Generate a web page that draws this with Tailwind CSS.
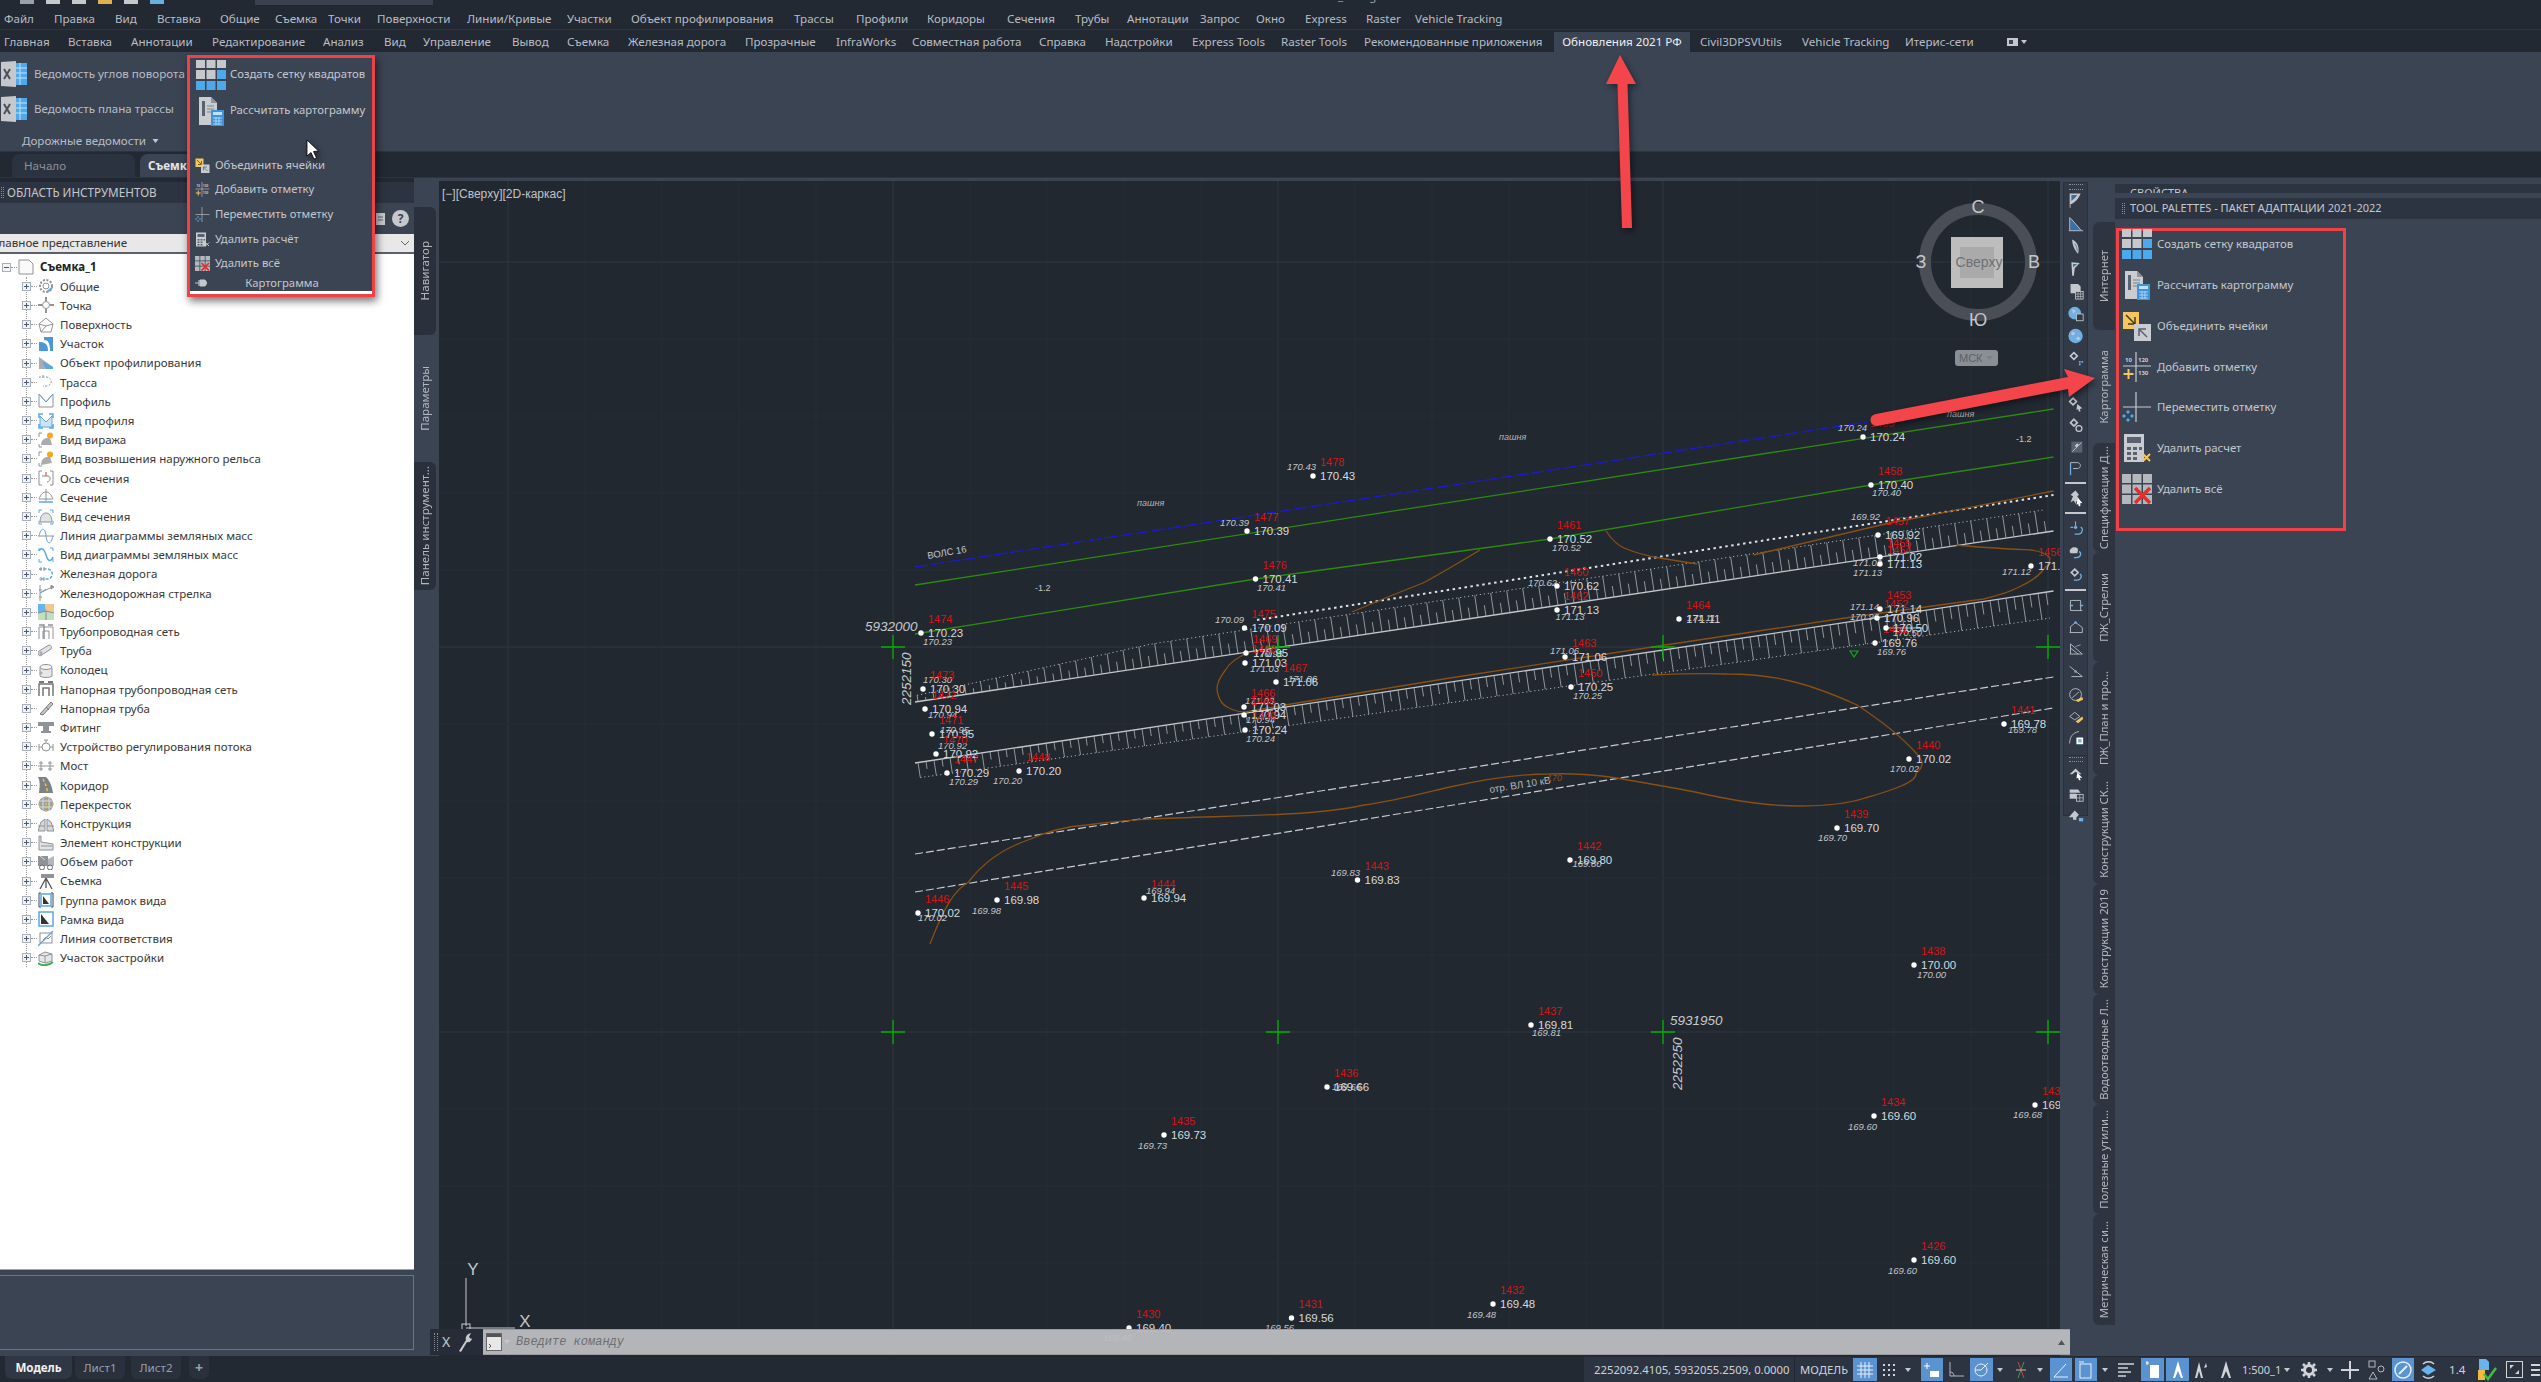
<!DOCTYPE html>
<html lang="ru">
<head>
<meta charset="UTF-8" />
<title>Civil 3D - Картограмма</title>
<script src="https://cdn.jsdelivr.net/npm/@tailwindcss/browser@4"></script>
</head>
<body class="bg-[#222933]">
<!-- shared icons -->
<svg class="hidden">
  <symbol id="i-grid" viewBox="0 0 30 30">
    <path d="M0 0h9v8H0zM10.500 0h9v8h-9zM21 0h9v8h-9zM0 10h9v9H0zM10.500 10h9v9h-9z" fill="#c6c8cc"/>
    <path d="M21 10h9v9h-9zM0 21h9v9H0zM10.500 21h9v9h-9zM21 21h9v9h-9z" fill="#4ea9ec"/>
  </symbol>
  <symbol id="i-calc" viewBox="0 0 30 30">
    <path d="M3 1h12l6 6v22H3z" fill="#c9ccd0"/><path d="M15 1v6h6z" fill="#8e949c"/>
    <rect x="6" y="5" width="3" height="15" fill="#59626e"/><path d="M11 10h7M11 13h7M11 16h4" stroke="#7d848e"/>
    <rect x="15" y="14" width="13" height="16" fill="#3f93da"/><rect x="17" y="16" width="9" height="3" fill="#bfe0f7"/>
    <path d="M17 22h9M17 25h9M17 28h9M20 21v8M23 21v8" stroke="#bfe0f7" stroke-width=".8"/>
  </symbol>
  <symbol id="i-merge" viewBox="0 0 30 30">
    <rect x="1" y="1" width="16" height="17" fill="#f3c660"/><path d="M4 4l9 9M13 6v7H6" stroke="#4a3b17" stroke-width="1.500" fill="none"/>
    <rect x="12" y="13" width="17" height="17" fill="#c9ccd0"/><path d="M25 26l-8-8M17 25v-7h7" stroke="#59626e" stroke-width="1.500" fill="none"/>
  </symbol>
  <symbol id="i-add" viewBox="0 0 30 30">
    <path d="M14 0v30M1 14h28" stroke="#c9ccd0" stroke-width="1.200"/>
    <text x="3" y="10" font-size="6" font-weight="700" fill="#c9ccd0">10</text><text x="16" y="10" font-size="6" font-weight="700" fill="#c9ccd0">120</text><text x="16" y="23" font-size="6" font-weight="700" fill="#c9ccd0">130</text>
    <path d="M6.500 17v10M1.500 22h10" stroke="#f3c660" stroke-width="2"/>
  </symbol>
  <symbol id="i-move" viewBox="0 0 30 30">
    <path d="M14 0v30M1 15h28" stroke="#c9ccd0" stroke-width="1.200"/>
    <path d="M6 18l2 2-2 2-2-2zM6 26l2 2-2 2-2-2zM2 22l2 2-2 2-2-2zM10 22l2 2-2 2-2-2z" fill="#4ea9ec"/>
  </symbol>
  <symbol id="i-delcalc" viewBox="0 0 30 30">
    <rect x="2" y="1" width="20" height="28" fill="#c9ccd0"/><rect x="5" y="4" width="14" height="6" fill="#59626e"/>
    <path d="M5 14h4v3H5zM11 14h4v3h-4zM17 14h3v3h-3zM5 19h4v3H5zM11 19h4v3h-4zM5 24h4v3H5zM11 24h4v3h-4z" fill="#59626e"/>
    <path d="M21 21l7 7M28 21l-7 7" stroke="#f3c660" stroke-width="2"/>
  </symbol>
  <symbol id="i-delall" viewBox="0 0 30 30">
    <path d="M0 0h9v9H0zM10.500 0h9v9h-9zM21 0h9v9h-9zM0 10.500h9v9H0zM10.500 10.500h9v9h-9zM21 10.500h9v9h-9zM0 21h9v9H0zM10.500 21h9v9h-9zM21 21h9v9h-9z" fill="#b4b7bc"/>
    <path d="M13 14l15 15M28 14L13 29" stroke="#ec2b2b" stroke-width="3.500"/>
  </symbol>
  <symbol id="i-excel" viewBox="0 0 28 28">
    <rect x="13" y="3" width="14" height="22" fill="#4ea9ec"/><path d="M13 8h14M13 13h14M13 18h14M20 3v22" stroke="#c3e2f8"/>
    <path d="M1 2l15-1v26l-15-1z" fill="#c6c8cc"/><path d="M4 9l6 10M10 9l-6 10" stroke="#4a515c" stroke-width="2"/>
  </symbol>
  <symbol id="i-dn" viewBox="0 0 6 4"><path d="M0 0h6L3 4z" fill="#c4c8ce"/></symbol>
</svg>

<div class="relative w-[2541px] h-[1382px] overflow-hidden flex flex-col bg-[#222933] text-[11.6px] text-[#b9bdc4] font-['Noto_Sans','Liberation_Sans',sans-serif]">

  <!-- title strip, cut off by the top of the capture -->
  <div class="h-[8px] flex items-start overflow-hidden">
    <div class="flex gap-[12px] pl-[20px] w-[255px] -mt-[6px]">
      <span class="w-[14px] h-[10px] bg-[#9aa0a8]"></span><span class="w-[14px] h-[10px] bg-[#c6c8cc]"></span><span class="w-[14px] h-[10px] bg-[#c6c8cc]"></span><span class="w-[14px] h-[10px] bg-[#e0b050]"></span><span class="w-[14px] h-[10px] bg-[#c6c8cc]"></span><span class="w-[14px] h-[10px] bg-[#6aaee0]"></span>
    </div>
    <div class="w-[178px] h-[5px] bg-[#3a4250]"></div>
    <div class="ml-[729px] -mt-[13px] text-[#9ba0a8]">Autodesk Civil 3D 2021 - Съемка_1.dwg</div>
  </div>

  <!-- menu bar -->
  <div class="h-[22px] flex items-center pl-[4px] border-b border-[#2d3440] leading-none">
    <span class="w-[50px]">Файл</span><span class="w-[61px]">Правка</span><span class="w-[42px]">Вид</span><span class="w-[63px]">Вставка</span><span class="w-[55px]">Общие</span><span class="w-[53px]">Съемка</span><span class="w-[49px]">Точки</span><span class="w-[90px]">Поверхности</span><span class="w-[100px]">Линии/Кривые</span><span class="w-[64px]">Участки</span><span class="w-[163px]">Объект профилирования</span><span class="w-[62px]">Трассы</span><span class="w-[71px]">Профили</span><span class="w-[80px]">Коридоры</span><span class="w-[68px]">Сечения</span><span class="w-[52px]">Трубы</span><span class="w-[73px]">Аннотации</span><span class="w-[56px]">Запрос</span><span class="w-[49px]">Окно</span><span class="w-[61px]">Express</span><span class="w-[49px]">Raster</span><span>Vehicle Tracking</span>
  </div>

  <!-- ribbon tabs -->
  <div class="h-[20px] mt-[2px] flex items-center pl-[4px] leading-none">
    <span class="w-[64px]">Главная</span><span class="w-[63px]">Вставка</span><span class="w-[81px]">Аннотации</span><span class="w-[111px]">Редактирование</span><span class="w-[61px]">Анализ</span><span class="w-[39px]">Вид</span><span class="w-[89px]">Управление</span><span class="w-[55px]">Вывод</span><span class="w-[61px]">Съемка</span><span class="w-[117px]">Железная дорога</span><span class="w-[91px]">Прозрачные</span><span class="w-[76px]">InfraWorks</span><span class="w-[127px]">Совместная работа</span><span class="w-[66px]">Справка</span><span class="w-[87px]">Надстройки</span><span class="w-[89px]">Express Tools</span><span class="w-[83px]">Raster Tools</span><span class="w-[190px]">Рекомендованные приложения</span>
    <span class="w-[136px] h-[20px] flex items-center justify-center bg-[#3b4453] text-[#eef0f2]">Обновления 2021 РФ</span>
    <span class="ml-[10px] w-[102px]">Civil3DPSVUtils</span><span class="w-[103px]">Vehicle Tracking</span><span class="w-[101px]">Итерис-сети</span>
    <svg class="w-[24px] h-[10px]" viewBox="0 0 24 10"><rect x="1" y="1" width="11" height="8" fill="#c4c8ce"/><rect x="3" y="3" width="4" height="4" fill="#3b4453"/><path d="M15 3h6l-3 4z" fill="#c4c8ce"/></svg>
  </div>

  <!-- ribbon -->
  <div class="h-[100px] bg-[#3b4453] flex flex-col pt-[5px] border-b border-[#2d3440]">
    <div class="h-[36px] flex items-center"><svg class="w-[28px] h-[28px]"><use href="#i-excel"/></svg><span class="ml-[6px]">Ведомость углов поворота</span></div>
    <div class="h-[36px] mt-[1px] flex items-center"><svg class="w-[28px] h-[28px]"><use href="#i-excel"/></svg><span class="ml-[6px]">Ведомость плана трассы</span></div>
    <div class="h-[22px] mt-[4px] flex items-center pl-[22px]"><span>Дорожные ведомости</span><svg class="ml-[6px] w-[7px] h-[4px]"><use href="#i-dn"/></svg></div>
  </div>

  <!-- file tabs -->
  <div class="h-[26px] flex items-end pl-[12px] border-b border-[#2d3440]">
    <div class="w-[123px] h-[23px] flex items-center pl-[12px] bg-[#2c3340] rounded-t-[8px] text-[#8b919a]">Начало</div>
    <div class="ml-[5px] w-[60px] h-[23px] flex items-center pl-[8px] bg-[#3b4453] rounded-t-[8px] font-bold text-[#e4e6e9]">Съемка</div>
  </div>

  <!-- main row -->
  <div class="relative flex-1 flex bg-[#3b4453] min-h-0">

    <!-- left: toolspace -->
    <div class="w-[414px] flex flex-col bg-[#3b4453]">
      <div class="h-[4px] bg-[#222933]"></div>
      <div class="h-[21px] flex items-center pl-[1px] gap-[3px] bg-[#2d3441] text-[11.7px] text-[#c4c8ce]"><span class="w-[3px] h-[11px] border-x border-dotted border-[#8a9099]"></span>ОБЛАСТЬ ИНСТРУМЕНТОВ</div>
      <div class="h-[31px] flex items-center justify-end pr-[5px] gap-[6px]">
        <svg class="w-[10px] h-[14px]" viewBox="0 0 10 14"><path d="M0 1h9v12H0z" fill="#c6c8cc"/><path d="M2 5h5M2 8h5" stroke="#59626e"/></svg>
        <span class="w-[17px] h-[17px] rounded-full bg-[#c6c8cc] text-[#3b4453] text-[12px] font-bold flex items-center justify-center leading-none">?</span>
      </div>
      <div class="h-[20px] flex items-center justify-between bg-[#e8e8e8] border-b-2 border-[#5b6068] text-[#333] overflow-hidden">
        <span class="-ml-[7px] whitespace-nowrap">Главное представление</span>
        <svg class="w-[8px] h-[5px] mr-[5px]" viewBox="0 0 8 5"><path d="M0 0l4 4 4-4" stroke="#666" fill="none"/></svg>
      </div>
      <div id="tree" class="h-[1015px] bg-white text-[#383838] text-[11.5px] pt-[3.500px]"></div>
      <div class="h-[6px] border-t border-[#9ea3aa]"></div>
      <div class="h-[75px] border border-l-0 border-[#6d7480]"></div>
    </div>

    <!-- left: vertical tabs -->
    <div class="w-[25px] flex flex-col pt-[29px] text-[#b4b8be]">
      <div class="h-[128px] w-[22px] bg-[#2a313c] rounded-r-[6px] flex items-center justify-center"><span class="[writing-mode:vertical-rl] rotate-180">Навигатор</span></div>
      <div class="h-[127px] w-[22px] bg-[#3b4453] flex items-center justify-center"><span class="[writing-mode:vertical-rl] rotate-180">Параметры</span></div>
      <div class="h-[128px] w-[22px] bg-[#2a313c] rounded-r-[6px] flex items-center justify-center"><span class="[writing-mode:vertical-rl] rotate-180">Панель инструмент...</span></div>
    </div>

    <!-- drawing -->
    <div class="w-[1621px] pt-[3px] bg-[#3b4453]">
      <svg id="draw" class="block w-[1621px] h-[1175px] bg-[#212830] font-['Liberation_Sans',sans-serif]" viewBox="439 181 1621 1175"></svg>
    </div>

    <!-- right side -->
    <div class="flex-1 flex min-w-0">
      <div class="w-[33px] pl-[3px] pt-[4px]">
        <div id="strip" class="w-[25px] h-[634px] bg-[#323a47] border border-[#2a313c] flex flex-col items-center"></div>
      </div>
      <div id="rtabs" class="w-[22px] flex flex-col pt-[44px] text-[#b4b8be]"></div>
      <div class="flex-1 min-w-0 flex flex-col">
        <div class="h-[6px]"></div>
        <div class="h-[9px] overflow-hidden bg-[#2d3441] pl-[15px] text-[11px] leading-[17px] text-[#c4c8ce]">СВОЙСТВА</div>
        <div class="h-[5px]"></div>
        <div class="h-[21px] flex items-center pl-[7px] gap-[5px] bg-[#2d3441] text-[11px] text-[#c4c8ce] whitespace-nowrap"><span class="w-[3px] h-[11px] border-x border-dotted border-[#8a9099]"></span>TOOL PALETTES - ПАКЕТ АДАПТАЦИИ 2021-2022</div>
        <div class="ml-[1px] mt-[9px] w-[230px] h-[303px] border-[3px] border-[#ef4146] flex flex-col pl-[3px] text-[11.400px] text-[#c4c8ce]">
          <div class="h-[28px] flex items-center -mt-[1px]"><svg class="w-[30px] h-[30px] shrink-0"><use href="#i-grid"/></svg><span class="ml-[5px]">Создать сетку квадратов</span></div>
          <div class="h-[41px] mt-[6px] flex items-center"><svg class="w-[30px] h-[30px]"><use href="#i-calc"/></svg><span class="ml-[5px]">Рассчитать картограмму</span></div>
          <div class="h-[41px] flex items-center"><svg class="w-[30px] h-[30px]"><use href="#i-merge"/></svg><span class="ml-[5px]">Объединить ячейки</span></div>
          <div class="h-[41px] flex items-center"><svg class="w-[30px] h-[30px]"><use href="#i-add"/></svg><span class="ml-[5px]">Добавить отметку</span></div>
          <div class="h-[40px] flex items-center"><svg class="w-[30px] h-[30px]"><use href="#i-move"/></svg><span class="ml-[5px]">Переместить отметку</span></div>
          <div class="h-[41px] flex items-center"><svg class="w-[30px] h-[30px]"><use href="#i-delcalc"/></svg><span class="ml-[5px]">Удалить расчет</span></div>
          <div class="h-[41px] flex items-center"><svg class="w-[30px] h-[30px]"><use href="#i-delall"/></svg><span class="ml-[5px]">Удалить всё</span></div>
        </div>
      </div>
    </div>

    <!-- command line floats over the drawing -->
    <div class="absolute left-[430px] top-[1151px] w-[1640px] h-[26px] flex items-stretch">
      <div class="w-[53px] bg-[#262d38] flex items-center pl-[4px] gap-[4px]">
        <span class="w-[4px] h-[18px] border-x border-dotted border-[#8a9099]"></span>
        <span class="text-[14px] text-[#c6c8cc] leading-none">X</span>
        <svg class="ml-[3px] w-[16px] h-[20px]" viewBox="0 0 16 20"><path d="M2 19l7-11c-1-3 1-6 5-7l-2 4 2 2 1-1c0 3-3 5-5 4l-6 10z" fill="#c6c8cc"/></svg>
      </div>
      <div class="flex-1 bg-[#bcbdc0]/95 flex items-center pl-[3px] border-y border-[#9a9ca0]">
        <svg class="w-[16px] h-[18px]" viewBox="0 0 16 18"><rect x=".5" y=".5" width="15" height="17" fill="#e8e8e8" stroke="#666"/><rect x="1" y="1" width="14" height="3" fill="#555"/><path d="M3 11l2 2-2 2" stroke="#555" fill="none"/></svg>
        <svg class="ml-[2px] w-[6px] h-[4px]"><use href="#i-dn"/></svg>
        <span class="ml-[6px] italic text-[#6d6f73] font-['Liberation_Mono',monospace] text-[12px]">Введите команду</span>
        <svg class="ml-auto mr-[5px] w-[7px] h-[5px]" viewBox="0 0 7 5"><path d="M0 5h7L3.500 0z" fill="#555"/></svg>
      </div>
    </div>
  </div>

  <!-- layout tabs + status bar -->
  <div class="h-[26px] flex items-center">
    <div class="ml-[5px] w-[67px] h-[23px] -mt-[3px] flex items-center justify-center bg-[#2f3744] rounded-b-[7px] font-bold text-[#f0f1f3]">Модель</div>
    <div class="ml-[3px] w-[50px] h-[23px] -mt-[3px] flex items-center justify-center bg-[#2a313c] rounded-b-[7px] text-[#9ba0a8]">Лист1</div>
    <div class="ml-[6px] w-[50px] h-[23px] -mt-[3px] flex items-center justify-center bg-[#2a313c] rounded-b-[7px] text-[#9ba0a8]">Лист2</div>
    <div class="ml-[8px] w-[20px] h-[23px] -mt-[3px] flex items-center justify-center bg-[#2a313c] rounded-b-[7px] text-[#9ba0a8] text-[14px] font-bold">+</div>

    <div class="absolute left-[1584px] bottom-0 w-[957px] h-[25px] flex items-center bg-[#2d3441] text-[#d0d3d8] leading-none whitespace-nowrap">
      <div class="w-[211px] pl-[10px] border-r border-[#222933] h-full flex items-center text-[11.300px]">2252092.4105, 5932055.2509, 0.0000</div>
      <div class="w-[58px] pl-[5px] text-[11.300px]">МОДЕЛЬ</div>
      <div class="w-[24px] h-[23px] bg-[#5a93cf] flex items-center justify-center"><svg class="w-[16px] h-[16px]" viewBox="0 0 16 16"><path d="M4 0v16M8 0v16M12 0v16M0 4h16M0 8h16M0 12h16" stroke="#e8eef5"/></svg></div>
      <svg class="ml-[5px] w-[13px] h-[13px]" viewBox="0 0 13 13"><path d="M1 1h2v2H1zM6 1h2v2H6zM11 1h2v2h-2zM1 6h2v2H1zM6 6h2v2H6zM11 6h2v2h-2zM1 11h2v2H1zM6 11h2v2H6zM11 11h2v2h-2z" fill="#d0d3d8"/></svg>
      <svg class="ml-[10px] w-[6px] h-[4px]"><use href="#i-dn"/></svg>
      <div class="ml-[10px] w-[22px] h-[23px] bg-[#5a93cf] flex items-center justify-center"><svg class="w-[16px] h-[16px]" viewBox="0 0 16 16"><path d="M3 1v6M0 4h6" stroke="#fff"/><rect x="6" y="9" width="9" height="6" fill="#fff"/></svg></div>
      <svg class="ml-[4px] w-[18px] h-[18px]" viewBox="0 0 18 18"><path d="M3 1v14h14M3 11c3 0 4 2 4 4" stroke="#b4b8be" fill="none"/></svg>
      <div class="ml-[5px] w-[23px] h-[23px] bg-[#5a93cf] flex items-center justify-center"><svg class="w-[17px] h-[17px]" viewBox="0 0 17 17"><circle cx="8" cy="9" r="6" stroke="#e8eef5" fill="none"/><path d="M8 9l7-7M2 9h6" stroke="#e8eef5"/></svg></div>
      <svg class="ml-[4px] w-[6px] h-[4px]"><use href="#i-dn"/></svg>
      <svg class="ml-[12px] w-[12px] h-[18px]" viewBox="0 0 12 18"><path d="M3 1l6 16" stroke="#d04040"/><path d="M9 1L3 17" stroke="#4a9a40"/><path d="M1 9h10" stroke="#b4b8be"/></svg>
      <svg class="ml-[10px] w-[6px] h-[4px]"><use href="#i-dn"/></svg>
      <div class="ml-[7px] w-[22px] h-[23px] bg-[#5a93cf] flex items-center justify-center"><svg class="w-[16px] h-[16px]" viewBox="0 0 16 16"><path d="M1 15L13 2M1 15h14" stroke="#e8eef5" fill="none"/></svg></div>
      <div class="ml-[3px] w-[22px] h-[23px] bg-[#5a93cf] flex items-center justify-center"><svg class="w-[16px] h-[18px]" viewBox="0 0 16 18"><rect x="2" y="3" width="11" height="14" stroke="#e8eef5" fill="none"/><path d="M1 1h5" stroke="#e8eef5"/></svg></div>
      <svg class="ml-[5px] w-[6px] h-[4px]"><use href="#i-dn"/></svg>
      <svg class="ml-[10px] w-[16px] h-[14px]" viewBox="0 0 16 14"><path d="M0 1h16M0 5h10M0 9h13M0 13h8" stroke="#d0d3d8" stroke-width="1.500"/></svg>
      <div class="ml-[7px] w-[23px] h-[23px] bg-[#5a93cf] flex items-center justify-center"><svg class="w-[14px] h-[19px]" viewBox="0 0 14 19"><path d="M1 1v4M-1 3h4" stroke="#fff"/><rect x="4" y="5" width="9" height="13" fill="#fff"/></svg></div>
      <div class="ml-[2px] w-[23px] h-[23px] bg-[#5a93cf] flex items-center justify-center"><svg class="w-[16px] h-[19px]" viewBox="0 0 16 19"><path d="M8 1L3 18h2l3-7 3 7h2z" fill="#fff"/></svg></div>
      <svg class="ml-[4px] w-[17px] h-[19px]" viewBox="0 0 17 19"><path d="M6 2L2 18h2l2-7 2 7h2zM13 3l-2 5 3-1z" fill="#d0d3d8"/></svg>
      <svg class="ml-[8px] w-[16px] h-[19px]" viewBox="0 0 16 19"><path d="M8 1L3 18h2l3-7 3 7h2z" fill="#d0d3d8"/></svg>
      <div class="ml-[8px] w-[37px] text-[11px]">1:500_1</div>
      <svg class="ml-[5px] w-[6px] h-[4px]"><use href="#i-dn"/></svg>
      <svg class="ml-[11px] w-[16px] h-[16px]" viewBox="0 0 16 16"><circle cx="8" cy="8" r="4.500" fill="none" stroke="#d0d3d8" stroke-width="3"/><path d="M8 0v3M8 13v3M0 8h3M13 8h3M2 2l2 2M12 12l2 2M14 2l-2 2M4 12l-2 2" stroke="#d0d3d8" stroke-width="2.500"/></svg>
      <svg class="ml-[10px] w-[6px] h-[4px]"><use href="#i-dn"/></svg>
      <svg class="ml-[8px] w-[18px] h-[18px]" viewBox="0 0 18 18"><path d="M9 0v18M0 9h18" stroke="#d0d3d8" stroke-width="2"/></svg>
      <svg class="ml-[9px] w-[17px] h-[20px]" viewBox="0 0 17 20"><rect x="1" y="1" width="6" height="6" fill="none" stroke="#b4b8be"/><circle cx="13" cy="9" r="3" fill="none" stroke="#b4b8be"/><path d="M5 12l4 7H1z" fill="none" stroke="#b4b8be"/></svg>
      <div class="ml-[7px] w-[22px] h-[23px] bg-[#5a93cf] flex items-center justify-center"><svg class="w-[18px] h-[18px]" viewBox="0 0 18 18"><circle cx="9" cy="9" r="8" fill="none" stroke="#e8eef5" stroke-width="1.500"/><path d="M5 13l8-8" stroke="#e8eef5" stroke-width="2"/></svg></div>
      <svg class="ml-[6px] w-[17px] h-[20px]" viewBox="0 0 17 20"><path d="M8 5l8 5-8 5-7-5z" fill="#6ab4ee"/><path d="M3 4c3-3 8-3 11 0M3 16c3 3 8 3 11 0" fill="none" stroke="#d0d3d8" stroke-width="1.500"/></svg>
      <div class="ml-[12px] w-[15px]">1.4</div>
      <svg class="ml-[11px] w-[22px] h-[23px]" viewBox="0 0 22 23"><path d="M4 1h7l3 3v8H4z" fill="#6ab4ee"/><path d="M3 12h7v10H3z" fill="#f3b83c"/><path d="M9 16l4 5 8-11" stroke="#3ec03e" stroke-width="2.500" fill="none"/></svg>
      <svg class="ml-[9px] w-[17px] h-[17px]" viewBox="0 0 17 17"><rect x=".5" y=".5" width="16" height="16" fill="none" stroke="#d0d3d8"/><path d="M4 4h4L4 8zM13 13H9l4-4z" fill="#d0d3d8"/></svg>
      <svg class="ml-[8px] w-[9px] h-[14px]" viewBox="0 0 9 14"><path d="M0 2h9M0 7h9M0 12h9" stroke="#d0d3d8" stroke-width="2"/></svg>
    </div>
  </div>

  <!-- ribbon panel opened over the tree -->
  <div class="absolute left-[187px] top-[55px] w-[188px] h-[242px] border-[3px] border-[#ef4146] bg-[#3b4453] shadow-[2px_4px_8px_rgba(0,0,0,0.55)] flex flex-col text-[11.300px] text-[#c4c8ce]">
    <div class="h-[36px] -mt-[1px] flex items-center pl-[6px]"><svg class="w-[30px] h-[30px]"><use href="#i-grid"/></svg><span class="ml-[4px] whitespace-nowrap">Создать сетку квадратов</span></div>
    <div class="h-[36px] flex items-center pl-[6px]"><svg class="w-[30px] h-[30px]"><use href="#i-calc"/></svg><span class="ml-[4px] whitespace-nowrap">Рассчитать картограмму</span></div>
    <div class="h-[24px] mt-[25px] flex items-center pl-[5px]"><svg class="w-[15px] h-[15px]"><use href="#i-merge"/></svg><span class="ml-[5px]">Объединить ячейки</span></div>
    <div class="h-[25px] flex items-center pl-[5px]"><svg class="w-[15px] h-[15px]"><use href="#i-add"/></svg><span class="ml-[5px]">Добавить отметку</span></div>
    <div class="h-[25px] flex items-center pl-[5px]"><svg class="w-[15px] h-[15px]"><use href="#i-move"/></svg><span class="ml-[5px]">Переместить отметку</span></div>
    <div class="h-[24px] flex items-center pl-[5px]"><svg class="w-[15px] h-[15px]"><use href="#i-delcalc"/></svg><span class="ml-[5px]">Удалить расчёт</span></div>
    <div class="h-[24px] flex items-center pl-[5px]"><svg class="w-[15px] h-[15px]"><use href="#i-delall"/></svg><span class="ml-[5px]">Удалить всё</span></div>
    <div class="h-[16px] flex items-center pl-[5px]"><svg class="w-[12px] h-[8px]" viewBox="0 0 12 8"><path d="M0 4h4M4 1v6M5 1h5l2 3-2 3H5z" stroke="#c4c8ce" fill="#c4c8ce"/></svg><span class="flex-1 text-center pr-[15px]">Картограмма</span></div>
    <div class="h-[3px] bg-white"></div>
  </div>

  <!-- annotation arrows and the mouse pointer -->
  <svg class="absolute left-0 top-0 w-[2541px] h-[1382px] pointer-events-none drop-shadow-[2px_3px_3px_rgba(0,0,0,0.45)]" viewBox="0 0 2541 1382">
    <path d="M1620 55l16 29h-8.500l4.500 144h-10l-4.500-144H1606z" fill="#f4464a"/>
    <path d="M1876 414l192-37-4-8 31 9-26 19-1-8-191 37a5 5 0 0 1-1-12z" fill="#f4464a"/>
    <path d="M307 140v16l4-3.500 3 6.500 2.500-1-3-6.500 5-.5z" fill="#fff" stroke="#000" stroke-width=".8"/>
  </svg>
</div>

<script>
  // дерево инструментов
  const g = 'fill="none" stroke="#8f9296"';
  const blu = 'fill="none" stroke="#5aa7e6"';
  const treeItems = [
    ["Общие", `<circle cx="8" cy="8" r="3" ${g}/><circle cx="8" cy="8" r="6" ${g} stroke-width="2" stroke-dasharray="2 1.500"/><path d="M9 14l5-4" stroke="#5aa7e6" stroke-width="2"/>`],
    ["Точка", `<circle cx="8" cy="8" r="3.500" ${g}/><path d="M8 0v4M8 12v4M0 8h4M12 8h4" stroke="#8f9296" stroke-width="2"/>`],
    ["Поверхность", `<path d="M8 1l7 6-2 8H3L1 7zM1 7l7 2 7-2M8 9l-5 6" ${g}/>`],
    ["Участок", `<path d="M1 6c6 0 9 2 9 9H1z M6 1h9v14h-3C12 7 10 4 6 4z" fill="#4b98d8"/>`],
    ["Объект профилирования", `<path d="M1 2l14 10v2H1z" fill="#a9adb2"/><path d="M4 6l11 6v2H8z" fill="#5aa7e6"/>`],
    ["Трасса", `<path d="M1 3h7c7 0 7 9 0 9H5" ${g} stroke-dasharray="2 1.500"/><path d="M5 1v3" stroke="#5aa7e6"/>`],
    ["Профиль", `<path d="M1 14V1l7 8 7-8v13z" ${g}/><path d="M1 1l7 8 7-8" stroke="#5aa7e6" fill="none"/>`],
    ["Вид профиля", `<path d="M1 5V1h4M11 1h4v4M1 11v4h4M11 15h4v-4" ${blu} stroke-width="1.500"/><path d="M2 3l6 6 6-6v11H2z" fill="#cde3f5" stroke="#5aa7e6"/>`],
    ["Вид виража", `<path d="M1 5V1h3M1 12v3h3" ${g}/><path d="M3 13c0-5 4-8 9-7l2 7z" fill="#a9adb2"/><circle cx="12" cy="3.500" r="3" fill="#f5a623"/>`],
    ["Вид возвышения наружного рельса", `<path d="M1 5V1h3M1 12v3h3" ${g}/><path d="M3 14c0-6 4-9 9-8l2 6z" fill="#a9adb2"/><circle cx="12" cy="3.500" r="3" fill="#f5a623"/>`],
    ["Ось сечения", `<path d="M4 1H1v14h3M12 1h3v14h-3" ${g}/><path d="M4 6h6c3 0 3 6-1 6" fill="none" stroke="#888"/><path d="M8 2v4" stroke="#d04040"/>`],
    ["Сечение", `<path d="M1 10c2-5 4-7 7-7s5 2 7 7z" ${g}/><path d="M8 0v12" stroke="#8f9296"/><path d="M1 13h14" stroke="#5aa7e6" stroke-width="1.500"/>`],
    ["Вид сечения", `<path d="M1 4V1h3M12 1h3v3M1 12v3h3M12 15h3v-3" ${blu}/><path d="M2 13c0-6 3-9 6-9s6 3 6 9z" fill="#dfe3e6" stroke="#8f9296"/>`],
    ["Линия диаграммы земляных масс", `<path d="M1 8c2-9 6-9 7 0s5 9 7 0" ${blu}/><path d="M0 8h16" stroke="#8f9296"/>`],
    ["Вид диаграммы земляных масс", `<path d="M1 4V1M12 1h3v3M1 12v3h3M15 12v3" ${blu}/><path d="M1 4c2-4 5-3 7 4s5 7 7 2" ${blu} stroke-width="1.500"/>`],
    ["Железная дорога", `<path d="M1 3h8c7 0 7 10 0 10H1" ${blu} stroke-dasharray="3 1.500" stroke-width="1.500"/><path d="M3 1v4M6 1v4M3 11v4M6 11v4" stroke="#8f9296"/>`],
    ["Железнодорожная стрелка", `<path d="M2 16V0M2 8l12-6" ${g}/><path d="M2 8l6-4" stroke="#5aa7e6"/><path d="M1 5h3M1 12h3M13 0l3 2-3 2z" fill="#8f9296" stroke="#8f9296"/>`],
    ["Водосбор", `<rect x="0" y="0" width="16" height="16" fill="#bfe0c0"/><path d="M0 0h7l1 7-8 2z" fill="#6ab4ee"/><path d="M7 0h9v9l-8-2z" fill="#f3c890"/><path d="M0 9l8-2 8 2M8 7v9" stroke="#888" fill="none"/>`],
    ["Трубопроводная сеть", `<path d="M1 15V3h14v12M5 15V7h6v8" ${g}/><path d="M1 1h5v14M10 1h5" ${g} stroke-width="1.500"/>`],
    ["Труба", `<path d="M2 13l11-7a2.500 2.500 0 0 0-2-4L1 8a3 3 0 0 0 1 5z" fill="#dfe1e4" stroke="#8f9296"/><ellipse cx="3" cy="10.500" rx="1.500" ry="2.500" fill="#a9adb2"/>`],
    ["Колодец", `<path d="M2 6v8c2 2 10 2 12 0V6" fill="#e6e7e9" stroke="#8f9296"/><ellipse cx="8" cy="5" rx="6" ry="2.500" fill="#f3f3f3" stroke="#8f9296"/><circle cx="3" cy="11" r="1.500" fill="#a9adb2"/>`],
    ["Напорная трубопроводная сеть", `<path d="M1 15V3h14v12M5 15V7h6v8" fill="none" stroke="#777" stroke-width="1.500"/><path d="M1 1h5M10 1h5" stroke="#777" stroke-width="2"/>`],
    ["Напорная труба", `<path d="M2 14L13 2l2 2L5 15z" fill="#c4c6c9" stroke="#777"/><path d="M8 7l3 3" stroke="#777"/>`],
    ["Фитинг", `<path d="M0 2h16v4h-5v5h2v2H3v-2h2V6H0z" fill="#8f9296"/>`],
    ["Устройство регулирования потока", `<path d="M1 5v7M15 5v7M1 8h3M12 8h3M6 1h4M8 1v3" ${g}/><circle cx="8" cy="8" r="4" ${g}/>`],
    ["Мост", `<path d="M0 8h16M3 3v10M1 5h4M1 11h4M12 3v10M10 5h4M10 11h4" ${g}/>`],
    ["Коридор", `<path d="M1 16C2 8 2 4 0 0h8c4 4 6 9 7 16z" fill="#7d8085"/><path d="M5 2c2 4 4 8 4.500 14" stroke="#f3c33c" stroke-width="1.500" stroke-dasharray="3 2" fill="none"/>`],
    ["Перекресток", `<circle cx="8" cy="8" r="7.500" fill="#9a9da1"/><path d="M0 8h16M8 0v16" stroke="#f3c33c" stroke-dasharray="2 1.500"/><path d="M5 1v14M11 1v14M1 5h14M1 11h14" stroke="#d8dadc"/>`],
    ["Конструкция", `<path d="M0 15l3-9 4-3v12zM16 15l-3-9-4-3v12z" fill="#d6d8da" stroke="#8f9296"/><path d="M0 10h7M9 10h7" stroke="#8f9296"/>`],
    ["Элемент конструкции", `<path d="M1 1l2 0v6l12 2v6H1z" fill="#e0e2e4" stroke="#8f9296"/><path d="M3 11h11" stroke="#8f9296"/>`],
    ["Объем работ", `<path d="M0 2h10v10H0z" fill="#8f9296"/><path d="M10 5l6-3v10h-6z" fill="#b4b7bb"/><path d="M2 2l5 4" stroke="#d8dadc"/><circle cx="4" cy="13.500" r="2.500" fill="#fff" stroke="#666"/><circle cx="12" cy="13.500" r="2.500" fill="#fff" stroke="#666"/>`],
    ["Съемка", `<rect x="3" y="1" width="13" height="4" fill="#8f9296"/><path d="M8 5L2 16M8 5l6 11M8 5v10" stroke="#555" stroke-width="1.300"/>`],
    ["Группа рамок вида", `<path d="M3 1H1v14h2M13 1h2v14h-2" stroke="#444" fill="none"/><rect x="3" y="2" width="10" height="12" fill="#fff" stroke="#5aa7e6" stroke-width="1.500"/><path d="M5 4v8h6z" fill="#333"/>`],
    ["Рамка вида", `<rect x="1" y="1" width="14" height="14" fill="#fff" stroke="#5aa7e6" stroke-width="1.500"/><path d="M3 3v10h8z" fill="#333"/>`],
    ["Линия соответствия", `<rect x="2" y="2" width="12" height="10" fill="none" stroke="#8f9296"/><path d="M0 15L15 0" stroke="#5aa7e6" stroke-width="1.300"/><path d="M5 9l3-3 2 2 3-3" stroke="#8f9296" fill="none"/>`],
    ["Участок застройки", `<path d="M1 5l6-3 7 2v7l-7 2-6-2z" fill="#e6e7e9" stroke="#8f9296"/><path d="M7 6v7M1 5l6 1 7-2" stroke="#8f9296" fill="none"/><path d="M0 13c3 3 10 3 15-1" stroke="#3fa85a" stroke-width="2" fill="none"/>`],
  ];
  const plus = '<svg class="w-[9px] h-[9px] shrink-0" viewBox="0 0 9 9"><rect x=".5" y=".5" width="8" height="8" fill="#f2f3f5" stroke="#a9b0b8"/><path d="M2 4.500h5M4.500 2v5" stroke="#4a5a70"/></svg>';
  const conn = '<span class="w-[6px] shrink-0 border-t border-dotted border-[#999]"></span>';
  let treeHtml = `<div class="flex items-center h-[19.2px] pl-[2px]"><svg class="w-[9px] h-[9px] shrink-0" viewBox="0 0 9 9"><rect x=".5" y=".5" width="8" height="8" fill="#f2f3f5" stroke="#a9b0b8"/><path d="M2 4.500h5" stroke="#4a5a70"/></svg>${conn}<svg class="ml-[1px] w-[16px] h-[16px]" viewBox="0 0 16 16"><path d="M1 1h10l4 4v10H1z" fill="#fafafa" stroke="#8f9296"/></svg><span class="ml-[6px] font-bold text-[#222]">Съемка_1</span></div>`;
  treeHtml += '<div class="ml-[26px] border-l border-dotted border-[#999]">';
  treeItems.forEach(([label, icon]) => {
    treeHtml += `<div class="flex items-center h-[19.2px] -ml-[5px]">${plus}${conn}<svg class="ml-[1px] w-[16px] h-[16px] shrink-0" viewBox="0 0 16 16">${icon}</svg><span class="ml-[6px] whitespace-nowrap">${label}</span></div>`;
  });
  document.getElementById("tree").innerHTML = treeHtml + "</div>";

  // вертикальные вкладки справа
  const rightTabs = [["Интернет",108,0],["Картограмма",113,1],["Спецификации Д...",109,0],["ПЖ_Стрелки",110,0],["ПЖ_План и про...",113,0],["Конструкции СК...",109,0],["Конструкции 2019",110,0],["Водоотводные Л...",110,0],["Полезные утили...",110,0],["Метрическая си...",111,0]];
  document.getElementById("rtabs").innerHTML = rightTabs.map(([t, h, on]) =>
    `<div class="${on ? "bg-[#3b4453]" : "bg-[#2e3541] rounded-l-[6px]"} w-[22px] shrink-0 flex items-center justify-center overflow-hidden whitespace-nowrap text-[11.300px]" style="height:${h}px"><span class="[writing-mode:vertical-rl] rotate-180">${t}</span></div>`).join("");

  // панель инструментов рядом с палитрой
  const W = 'fill="#c4c8ce"', B = 'fill="#6fb0e4"', L = 'fill="none" stroke="#c4c8ce"', S = 'fill="none" stroke="#6fb0e4"';
  const stripIcons = [
    [`<path d="M2 1h13C13 7 8 12 3 14V18H2z" ${W}/><path d="M4 3h7C9 6 7 8 4 10z" fill="#3b6f9e"/>`,22],
    [`<path d="M2 2v16h15z" fill="#3b6f9e"/><path d="M3 3l12 14M1 18h17M2 2v16" ${L}/>`,24],
    [`<path d="M5 1c6 3 9 9 7 17C8 14 5 8 5 1z" ${W}/><path d="M8 6c2 3 3 6 3 9" stroke="#3b6f9e" fill="none"/>`,22],
    [`<path d="M4 2l10 1-6 6-1 9H5z" ${W}/><path d="M6 4l5 0-5 4z" fill="#3b6f9e"/>`,22],
    [`<path d="M3 1h9l3 3v8H3z" ${W}/><rect x="9" y="10" width="9" height="9" fill="#3b4453" stroke="#c4c8ce"/><path d="M12 10v9M15 10v9M9 13h9M9 16h9" stroke="#c4c8ce" stroke-width=".7"/>`,23],
    [`<circle cx="8" cy="9" r="7.500" ${B}/><path d="M5 4l4 2-3 4z" ${W}/><rect x="10" y="10" width="8" height="8" fill="#323a47" stroke="#c4c8ce"/>`,22],
    [`<circle cx="9" cy="10" r="8.500" ${B}/><circle cx="6" cy="7" r="2" ${W}/><circle cx="12" cy="13" r="2" ${W}/>`,22],
    [`<path d="M7 3l4 4-4 4-4-4z" ${L} stroke-width="2"/><path d="M13 13h2v2h-2zM16 13h2v2h-2zM13 16h2v2h-2z" ${B}/>`,23],
    [`<path d="M7 3l4 4-4 4-4-4z" ${L} stroke-width="2"/>`,23],
    [`<path d="M6 3l4 4-4 4-4-4z" ${L} stroke-width="2"/><path d="M11 10l6 5-3 1 1 3-2 0-1-3-2 1z" ${W}/>`,22],
    [`<path d="M7 2l4 4-4 4-4-4z" ${L} stroke-width="2"/><circle cx="13" cy="13" r="3.500" ${L} stroke-width="1.500"/>`,22],
    [`<rect x="4" y="3" width="13" height="13" fill="#59626e"/><path d="M5 15L16 4" stroke="#c4c8ce"/><path d="M8 8l3-3 2 2-3 3z" ${W}/>`,21],
    [`<path d="M3 3v15" ${S} stroke-width="1.500"/><path d="M3 3h8c5 0 5 7 0 7H6" ${L}/>`,21],
  ];
  const stripIcons2 = [
    [`<path d="M9 1l4 5-2 2 5 9-6-3-1 3-2-4-4 2 3-7-3-2z" ${W}/><path d="M12 10l5 6-3 0 1 3-2 1-1-3-2 1z" fill="#fff"/>`,22],
  ];
  const stripIcons3 = [
    [`<path d="M9 1v6" ${L}/><circle cx="9" cy="8" r="2" ${B}/><path d="M3 8h3M15 8c3 0 3 8-3 8H8" ${S} stroke-width="1.500"/>`,24],
    [`<path d="M2 9c0-5 7-7 10-3l-1 5H3z" ${W}/><path d="M13 9c3 1 3 7-3 7H7" ${S} stroke-width="1.500"/>`,23],
    [`<path d="M8 3l4 4-4 4-4-4z" ${L} stroke-width="2"/><path d="M14 9c3 1 2 7-3 7H7" ${S} stroke-width="1.500"/>`,22],
  ];
  const stripIcons4 = [
    [`<path d="M3 16h14M3 4v12M3 4h12v12" ${L}/><path d="M2 10h4M14 10h4" ${S} stroke-width="1.500"/>`,23],
    [`<path d="M2 16h15M3 16V9l6-5 8 6v6" ${L}/><circle cx="9" cy="4" r="1.500" ${B}/>`,21],
    [`<path d="M2 16h15M3 16V4l14 12M3 9l9 7" ${L}/><path d="M9 7l6-2" ${S}/>`,22],
    [`<path d="M2 4l15 12M4 16h13" ${L}/><circle cx="9" cy="10" r="1.500" ${B}/>`,23],
    [`<circle cx="9" cy="10" r="7" ${L}/><path d="M5 14L13 7" ${L}/><path d="M9 17l8-4 1 3-6 3z" fill="#f3c660"/>`,23],
    [`<path d="M2 10l6-5 6 5-6 4z" ${L}/><path d="M9 16l8-6 1 3-6 5z" fill="#f3c660"/>`,21],
    [`<path d="M2 17C2 9 6 4 13 3" ${L}/><rect x="10" y="10" width="8" height="8" fill="#fff"/><rect x="12" y="12" width="4" height="4" ${B}/>`,21],
  ];
  const stripIcons5 = [
    [`<path d="M2 11l7-7 7 7-3 0-4-3-4 3z" ${W}/><path d="M11 9l6 6-3 0 1 3-2 0-1-3-2 1z" fill="#fff"/>`,21],
    [`<path d="M2 4h10l3 4H2z" ${W}/><path d="M2 9h8v6H2z" ${W}/><rect x="10" y="10" width="8" height="8" fill="none" stroke="#c4c8ce"/><path d="M14 10v8M10 14h8" stroke="#c4c8ce" stroke-width=".8"/>`,21],
    [`<path d="M1 12l7-8 5 5-3 3v3H6v-3z" ${W}/><rect x="13" y="13" width="5" height="4" ${B}/>`,21],
  ];
  const iconRow = ([d, h]) => `<svg class="w-[16px] shrink-0" viewBox="0 0 19 20" style="height:${h}px">${d}</svg>`;
  const rule = '<div class="w-[21px] h-[2px] my-[3px] shrink-0 bg-[#c4c8ce]"></div>';
  document.getElementById("strip").innerHTML =
    '<div class="w-[14px] h-[6px] mt-[1px] shrink-0 border-y border-dotted border-[#8a9099]"></div>'
    + stripIcons.map(iconRow).join("") + rule + stripIcons2.map(iconRow).join("") + rule
    + stripIcons3.map(iconRow).join("") + rule + stripIcons4.map(iconRow).join("")
    + '<div class="w-[25px] h-[8px] shrink-0 border-b border-[#2a313c]"></div><div class="w-[14px] h-[5px] my-[1px] shrink-0 border-y border-dotted border-[#8a9099]"></div>'
    + stripIcons5.map(iconRow).join("");

  // чертёж
  let s = "";
  for (let x = 893 - 77 * 5; x < 2060; x += 77) {
    const major = (x - 893) % 385 === 0;
    s += `<path d="M${x} 181V1356" stroke="${major ? "#2e3642" : "#262d36"}"/>`;
  }
  for (let y = 647 - 77 * 5; y < 1356; y += 77) {
    const major = (y - 647) % 385 === 0;
    s += `<path d="M439 ${y}H2060" stroke="${major ? "#2e3642" : "#262d36"}"/>`;
  }

  const brown = 'fill="none" stroke="#8a4f12" stroke-width="1.300"';
  s += `<path d="M915 567L1867 422" stroke="#1a1ad6" stroke-width="1.300" stroke-dasharray="13 3"/>`;
  s += `<path d="M915 585L2053.500 409" stroke="#2c8a0e" stroke-width="1.300"/>`;
  s += `<path d="M915 634L921 633L1255.500 579L1550 539L1871 485L2053.500 457" fill="none" stroke="#2c8a0e" stroke-width="1.300"/>`;
  s += `<path d="M1257 620L2053.500 495" stroke="#dfe2e5" stroke-width="2" stroke-dasharray="2.500 3.500"/>`;
  s += `<path d="M915 854L2053.500 677M915 892L2053.500 708" stroke="#c8ccd0" stroke-width="1.200" stroke-dasharray="8 3"/>`;

  // полосы откоса с насечками
  function band(x0, y0, x1, y1, gapAt, up) {
    const k = (y1 - y0) / (x1 - x0);
    let out = `<path d="M${x0} ${y0}L${x1} ${y1}" stroke="#c4c8cc" stroke-width="1.300"/>`;
    let dots = "";
    let i = 0;
    for (let x = x0 + 3; x < x1; x += 8, i++) {
      const y = y0 + k * (x - x0);
      const gap = gapAt(x);
      const len = i % 2 ? gap * 0.5 : gap;
      const d = up ? -1 : 1;
      out += `<path d="M${x.toFixed(1)} ${y.toFixed(1)}L${(x + 0.15 * len * d).toFixed(1)} ${(y + len * d).toFixed(1)}" stroke="#aeb2b7" stroke-width=".8"/>`;
      dots += `${i ? "L" : "M"}${(x + 0.15 * gap * d).toFixed(1)} ${(y + gap * d).toFixed(1)}`;
    }
    return out + `<path d="${dots}" fill="none" stroke="#aeb2b7" stroke-dasharray="1.200 2.800"/>`;
  }
  s += band(915, 702, 2053.5, 531, x => 6 + 16 * Math.min(1, (x - 915) / 240), true);
  s += band(915, 763, 2053.5, 591, x => 15 + 11 * (x - 915) / 1138.5, false);

  // бровки, кривые коричневым
  s += `<path d="M930 944C945 905 955 890 968.500 882C985 860 1005 848 1028 840C1050 830 1070 826 1087 825C1150 816 1220 818 1285 814C1330 812 1350 808 1364 805C1400 800 1435 790 1450 787C1490 778 1520 774 1549 774C1570 773 1600 775 1616 778C1640 782 1670 787 1695 792C1730 800 1770 806 1798 806C1825 806 1850 803 1865 798C1890 791 1918 782 1916 773C1926 765 1922 760 1916 753C1900 735 1880 720 1857 705C1835 695 1810 685 1786 680C1765 675 1745 674 1727 674C1700 673 1675 674 1652 675" ${brown}/>`;
  s += `<path d="M1249 652C1236 658 1228 665 1225.500 670C1218 680 1216 686 1217.600 693C1219 700 1222 705 1229 708C1235 711 1240 712 1245 712L1285 705L1450 678L1652 647L1845 618L1983.600 599C2000 595 2010 592 2019 587C2030 582 2038 577 2043 570C2048 565 2052 560 2049 557C2045 553 2038 551 2031 550C2010 549 1985 548 1956 545" ${brown}/>`;
  s += `<path d="M1352 612C1380 600 1400 592 1423 583C1440 574 1455 565 1480 550M1606 531C1612 540 1617 545 1624 548C1636 553 1648 556 1659.500 558C1672 560 1685 562 1697 564" ${brown}/>`;
  s += `<path d="M1753.600 555L1885 524L2053.500 491" ${brown}/>`;

  // кресты сетки координат
  [[893,647],[1278,647],[1663,647],[2048,647],[893,1032],[1278,1032],[1663,1032],[2048,1032]].forEach(([x, y]) => {
    s += `<path d="M${x - 12} ${y}h24M${x} ${y - 12}v24" stroke="#00b400" stroke-width="1.300"/>`;
  });
  s += `<path d="M1850 651l8 0-4 6z" fill="none" stroke="#18a818" stroke-width="1.200"/>`;
  s += `<path d="M1885 628h38" stroke="#c4c8cc"/>`;

  // [x, y, номер, отметка, x подписи, y подписи, x номера, y номера]
  const points = [
    [1313,476,1478,"170.43",1287,466],[1247,531,1477,"170.39",1220,522],[1255.5,579,1476,"170.41",1257,587],
    [921,633,1474,"170.23",923,641],[1244.5,628,1475,"170.09",1215,619],[1246,653,1469,"170.95",1254,653],
    [1245,663,1468,"171.03",1250,668],[1276,682,1467,"171.06",1288,678],[923,689,1473,"170.30",923,679],
    [925,709,1472,"170.94",928,714],[932,734,1471,"170.95",940,729],[936,754,1470,"170.92",938,745],
    [947,773,1447,"170.29",949,781],[1019,771,1448,"170.20",993,780],[1244,707,1466,"171.03",1245,700],
    [1244,715,1465,"170.94",1246,719],[1245,730,1449,"170.24",1246,738],
    [1863,437,1459,"170.24",1838,427],[1871,485,1458,"170.40",1872,492],[1550,539,1461,"170.52",1552,547],
    [1878,535,1457,"169.92",1851,516,1885.5,521],[1880,557,1455,"171.02",1853,562],[1880,564,1454,"171.13",1853,572],
    [1557,586,1460,"170.62",1528,582],[1557,610,1462,"171.13",1555.5,616],[1679,619,1464,"171.11",1687,617],
    [1565,657,1463,"171.06",1550,650],[1571,687,1450,"170.25",1573,695],[1880,609,1453,"171.14",1850,606],
    [1877,618,1452,"170.96",1850,616],[1886,628,1451,"170.50",1893,632,1883,629],[1875,643,1428,"169.76",1877,651,-99,-99],
    [2031,566,1456,"171.12",2002,571],[2004,724,1441,"169.78",2008,729],[1909,759,1440,"170.02",1890,768],[1837,828,1439,"169.70",1818,837],
    [918,913,1446,"170.02",918,917],[997,900,1445,"169.98",972,910],[1144,898,1444,"169.94",1146,890],[1357.5,880,1443,"169.83",1331,872],
    [1327,1087,1436,"169.66",1332,1086],[1164,1135,1435,"169.73",1138,1145],[1291.5,1318,1431,"169.56",1265,1327],[1129,1328,1430,"169.40",1103,1337],
    [1570,860,1442,"169.80",1572.5,863],[1914,965,1438,"170.00",1917,974],[1531,1025,1437,"169.81",1532,1032],[1874,1116,1434,"169.60",1848,1126],
    [2035,1105,1433,"169.68",2013,1114],[1914,1260,1426,"169.60",1888,1270],[1493,1304,1432,"169.48",1467,1314],
  ];
  points.forEach(([x, y, id, v, ix, iy, rx, ry]) => {
    const nx = rx === undefined ? x + 7 : rx, ny = ry === undefined ? y - 14 : ry;
    s += `<text x="${ix}" y="${iy + 3.5}" font-size="9.500" font-style="italic" fill="#c4c6c9">${v}</text>`;
    s += `<text x="${nx}" y="${ny + 4}" font-size="11" fill="#d81414">${id}</text>`;
    s += `<circle cx="${x}" cy="${y}" r="2.700" fill="#fff"/>`;
    s += `<text x="${x + 7}" y="${y + 4}" font-size="11.500" fill="#d8dadc">${v}</text>`;
  });

  // подписи на чертеже
  const label = (x, y, t, attrs) => `<text x="${x}" y="${y}" ${attrs}>${t}</text>`;
  s += label(442, 198, "[−][Сверху][2D-каркас]", 'font-size="12" fill="#c0c4c8"');
  s += label(865, 631, "5932000", 'font-size="13.500" font-style="italic" fill="#c8cacd"');
  s += label(1670, 1025, "5931950", 'font-size="13.500" font-style="italic" fill="#c8cacd"');
  s += label(0, 0, "2252150", 'transform="translate(911 705) rotate(-90)" font-size="13.500" font-style="italic" fill="#c8cacd"');
  s += label(0, 0, "2252250", 'transform="translate(1682 1090) rotate(-90)" font-size="13.500" font-style="italic" fill="#c8cacd"');
  s += label(0, 0, "ВОЛС 16", 'transform="translate(928 559) rotate(-10)" font-size="9.500" fill="#c4c6c9"');
  s += label(0, 0, "отр. ВЛ 10 кВ", 'transform="translate(1490 793) rotate(-9)" font-size="10" fill="#b4b7bb"');
  s += label(1137, 506, "пашня", 'font-size="9" font-style="italic" fill="#b4b7bb"');
  s += label(1499, 440, "пашня", 'font-size="9" font-style="italic" fill="#b4b7bb"');
  s += label(1947, 417, "пашня", 'font-size="9" font-style="italic" fill="#b4b7bb"');
  s += label(1035, 591, "-1.2", 'font-size="9" fill="#c4c6c9"');
  s += label(2016, 442, "-1.2", 'font-size="9" fill="#c4c6c9"');
  s += label(1547, 781, "170", 'font-size="9" font-style="italic" fill="#8a4f12"');

  // видовой куб
  s += `<circle cx="1978" cy="262" r="53" fill="none" stroke="#4a4f57" stroke-width="12"/>`;
  s += `<rect x="1951" y="237" width="52" height="51" fill="#bdbdbd"/><rect x="1960" y="247" width="34" height="31" fill="#aaaaaa"/>`;
  s += label(1979, 267, "Сверху", 'text-anchor="middle" font-size="14" fill="#6d7075"');
  const cube = [["С",1978,213],["Ю",1978,326],["З",1921,268],["В",2034,268]];
  cube.forEach(([t, x, y]) => { s += label(x, y, t, 'text-anchor="middle" font-size="18" fill="#c4c6c9"'); });
  s += `<rect x="1955" y="350" width="43" height="16" rx="3" fill="#8a8f96"/>`;
  s += label(1959, 362, "МСК", 'font-size="11" fill="#5a5f66"');
  s += `<path d="M1986 356h7l-3.500 4z" fill="#7c8188"/>`;

  // значок ПСК
  s += `<path d="M466 1278V1326M466 1328H515" stroke="#c8cacd"/><rect x="462" y="1324" width="8" height="8" fill="none" stroke="#c8cacd"/>`;
  s += label(473, 1275, "Y", 'text-anchor="middle" font-size="17" fill="#c4c6c9"');
  s += label(525, 1327, "X", 'text-anchor="middle" font-size="17" fill="#c4c6c9"');

  document.getElementById("draw").innerHTML = s;
</script>
</body>
</html>
